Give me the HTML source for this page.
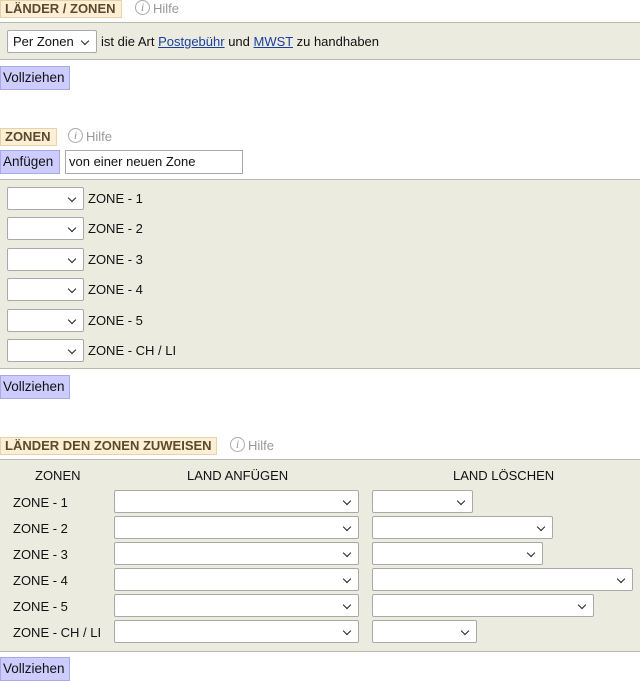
<!DOCTYPE html>
<html><head><meta charset="utf-8">
<style>
*{box-sizing:border-box;margin:0;padding:0}
body{width:640px;height:680px;position:relative;background:#fff;font-family:"Liberation Sans",sans-serif;font-size:13px;color:#111;overflow:hidden}
.a{position:absolute}
.lab{position:absolute;height:18px;background:#fcefd6;border:1px solid #e6d3aa;color:#5b4a2b;font-weight:bold;font-size:13px;line-height:16px;padding:0 4px;white-space:nowrap;overflow:hidden}
.help{position:absolute;color:#999;font-size:13px;line-height:18px;white-space:nowrap}
.help i{display:inline-block;width:15px;height:15px;border:1.3px solid #aaa;border-radius:50%;font-family:"Liberation Serif",serif;font-size:12px;line-height:13px;text-align:center;color:#999;margin-right:3px;vertical-align:middle;position:relative;top:-2px}
.panel{position:absolute;left:0;width:640px;background:#ecebdf;border-top:1px solid #b9b9b0;border-bottom:1px solid #b9b9b0}
.sel{position:absolute;background:#fff;border:1px solid #a9a9a9;border-radius:2px;height:23px;line-height:21px;padding-left:5px}
.sel:after{content:"";position:absolute;right:8px;top:7px;width:5px;height:5px;border-right:1.5px solid #222;border-bottom:1.5px solid #222;transform:rotate(45deg)}
.btn{position:absolute;left:0;height:24px;width:70px;background:#ccccff;border:1px solid #a9a9e6;line-height:22px;padding-left:2px;font-size:13.5px}
.t{position:absolute;line-height:16px;white-space:nowrap}
a{color:#1a3fa0;text-decoration:underline}
</style></head><body>

<div class="lab" style="left:0;top:0;width:122px">LÄNDER / ZONEN</div>
<div class="help" style="left:135px;top:0px"><i>i</i>Hilfe</div>
<div class="panel" style="top:22px;height:38px"></div>
<div class="sel" style="left:7px;top:30px;width:90px">Per Zonen</div>
<div class="t" style="left:101px;top:34px">ist die Art <a>Postgebühr</a> und <a>MWST</a> zu handhaben</div>
<div class="btn" style="top:66px">Vollziehen</div>

<div class="lab" style="left:0;top:128px;width:57px">ZONEN</div>
<div class="help" style="left:68px;top:128px"><i>i</i>Hilfe</div>
<div class="btn" style="top:150px;width:60px">Anfügen</div>
<div class="a" style="left:65px;top:150px;width:178px;height:24px;border:1px solid #a9a9a9;background:#fff;line-height:22px;padding-left:3px">von einer neuen Zone</div>
<div class="panel" style="top:179px;height:190px"></div>
<div class="sel" style="left:7px;top:187px;width:77px"></div><div class="t" style="left:88px;top:191px">ZONE - 1</div>
<div class="sel" style="left:7px;top:217px;width:77px"></div><div class="t" style="left:88px;top:221px">ZONE - 2</div>
<div class="sel" style="left:7px;top:248px;width:77px"></div><div class="t" style="left:88px;top:252px">ZONE - 3</div>
<div class="sel" style="left:7px;top:278px;width:77px"></div><div class="t" style="left:88px;top:282px">ZONE - 4</div>
<div class="sel" style="left:7px;top:309px;width:77px"></div><div class="t" style="left:88px;top:313px">ZONE - 5</div>
<div class="sel" style="left:7px;top:339px;width:77px"></div><div class="t" style="left:88px;top:343px">ZONE - CH / LI</div>
<div class="btn" style="top:375px">Vollziehen</div>

<div class="lab" style="left:0;top:437px;width:217px">LÄNDER DEN ZONEN ZUWEISEN</div>
<div class="help" style="left:230px;top:437px"><i>i</i>Hilfe</div>
<div class="panel" style="top:459px;height:193px"></div>
<div class="t" style="left:35px;top:468px">ZONEN</div>
<div class="t" style="left:187px;top:468px">LAND ANFÜGEN</div>
<div class="t" style="left:453px;top:468px">LAND LÖSCHEN</div>

<div class="t" style="left:13px;top:495px">ZONE - 1</div><div class="sel" style="left:114px;top:490px;width:245px"></div><div class="sel" style="left:372px;top:490px;width:101px"></div>
<div class="t" style="left:13px;top:521px">ZONE - 2</div><div class="sel" style="left:114px;top:516px;width:245px"></div><div class="sel" style="left:372px;top:516px;width:181px"></div>
<div class="t" style="left:13px;top:547px">ZONE - 3</div><div class="sel" style="left:114px;top:542px;width:245px"></div><div class="sel" style="left:372px;top:542px;width:171px"></div>
<div class="t" style="left:13px;top:573px">ZONE - 4</div><div class="sel" style="left:114px;top:568px;width:245px"></div><div class="sel" style="left:372px;top:568px;width:261px"></div>
<div class="t" style="left:13px;top:599px">ZONE - 5</div><div class="sel" style="left:114px;top:594px;width:245px"></div><div class="sel" style="left:372px;top:594px;width:222px"></div>
<div class="t" style="left:13px;top:625px">ZONE - CH / LI</div><div class="sel" style="left:114px;top:620px;width:245px"></div><div class="sel" style="left:372px;top:620px;width:105px"></div>
<div class="btn" style="top:657px">Vollziehen</div>
</body></html>
